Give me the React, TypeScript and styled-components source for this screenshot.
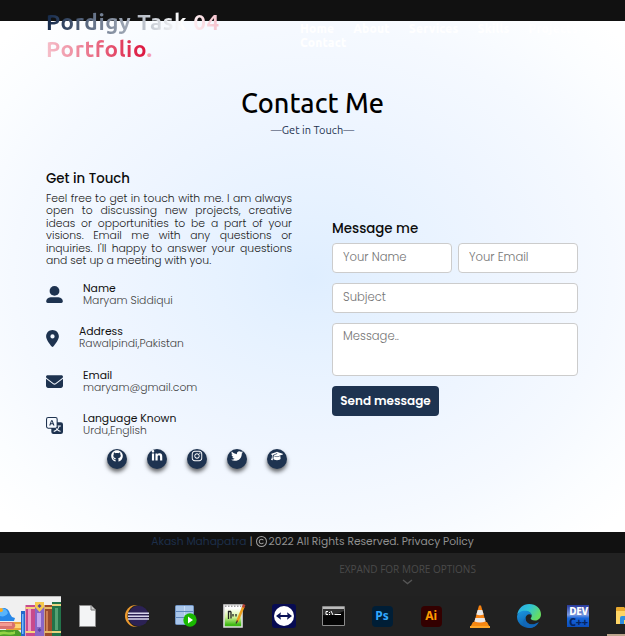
import React from 'react';
import styled, { createGlobalStyle } from 'styled-components';
import {
  FaLocationDot,
  FaEnvelope,
  FaGithub,
  FaLinkedinIn,
  FaInstagram,
  FaTwitter,
  FaGraduationCap,
  FaRegCopyright,
} from 'react-icons/fa6';
import { BsTranslate } from 'react-icons/bs';

const navy = '#1e3350';
const poppins = 'Poppins, Inter, sans-serif';
const ubuntu = 'Ubuntu, "Noto Sans", sans-serif';

const GlobalStyle = createGlobalStyle`
  * { box-sizing: border-box; margin: 0; padding: 0; }
  html, body { height: 636px; overflow: hidden; background: #222; }
  body { font-family: ${poppins}; }
`;

const Page = styled.div`
  width: 625px;
  height: 636px;
  display: flex;
  flex-direction: column;
  overflow: hidden;
`;

const Site = styled.main`
  height: 532px;
  flex: none;
  display: flex;
  flex-direction: column;
  background:
    linear-gradient(#111, #111) 0 0 / 100% 21px no-repeat,
    radial-gradient(ellipse farthest-corner at 50% 50%, #dfeeff 0%, #e7f2ff 22%, #eef5ff 44%, #f5f9ff 68%, #fbfdff 84%, #fff 96%) 0 21px / 100% 511px no-repeat;
`;

const Header = styled.header`
  height: 77px;
  padding: 8px 0 0 46px;
  display: flex;
`;

const Logo = styled.h1`
  width: 254px;
  font: 700 22.5px/27px ${ubuntu};
  letter-spacing: 0.6px;
  white-space: nowrap;
`;

const LogoInk = styled.span`
  background: linear-gradient(to right, #14294a, #fff 50%, #dc143c);
  -webkit-background-clip: text;
  background-clip: text;
  color: transparent;
`;

const LogoDot = styled.span`
  color: #f4a0b0;
`;

const Nav = styled.nav`
  width: 290px;
  padding-top: 14px;
  display: flex;
  flex-wrap: wrap;
  align-content: flex-start;
  column-gap: 19px;
`;

const NavLink = styled.a`
  font: 900 12px/14px ${ubuntu};
  letter-spacing: 0.2px;
  color: #fff;
`;

const Heading = styled.section`
  display: flex;
  flex-direction: column;
  align-items: center;
`;

const Title = styled.h2`
  margin-top: 8px;
  font: 500 27.1px/36px ${ubuntu};
  color: #000;
`;

const Subtitle = styled.p`
  margin-top: 1px;
  font: 400 11px/16px ${ubuntu};
  color: ${navy};
`;

const Columns = styled.div`
  display: grid;
  grid-template-columns: 246px 246px;
  column-gap: 40px;
  padding: 0 46px;
  margin-top: 33px;
`;

const SectionTitle = styled.h3`
  font: 500 13.35px/16px ${poppins};
  color: #0c0c0c;
`;

const Intro = styled.p`
  margin-top: 6px;
  font: 300 10.8px/12.4px ${poppins};
  color: #222;
`;

const IntroLine = styled.span`
  display: block;
  white-space: nowrap;
  text-align: justify;
  text-align-last: justify;
  &:last-child {
    text-align-last: left;
  }
`;

const Details = styled.ul`
  list-style: none;
  margin-top: 15.4px;
`;

const Detail = styled.li`
  height: 43.4px;
  display: flex;
  gap: 20px;
`;

const DetailIcon = styled.span<{ $w: number }>`
  width: ${(p) => p.$w}px;
  height: 24px;
  display: flex;
  align-items: center;
  justify-content: center;
  color: ${navy};
  svg {
    width: ${(p) => p.$w}px;
    height: 17px;
  }
`;

const DetailText = styled.div`
  font: 300 10.8px/12.2px ${poppins};
  color: #444;
`;

const DetailName = styled.div`
  font-weight: 400;
  color: #111;
`;

const DetailValue = styled.div`
  color: #444;
`;

const Socials = styled.div`
  display: flex;
  gap: 20px;
  margin-top: -7.4px;
  padding-left: 61px;
`;

const SocialLink = styled.a`
  width: 20px;
  height: 20px;
  border-radius: 50%;
  padding-top: 1px;
  display: flex;
  justify-content: center;
  background: ${navy};
  color: #fff;
  box-shadow: 0 3px 4px rgba(0, 0, 0, 0.6);
  svg {
    width: 12px;
    height: 12px;
  }
`;

const Form = styled.form`
  padding-top: 50px;
  display: grid;
  grid-template-columns: 1fr 1fr;
  column-gap: 6px;
  row-gap: 10px;
  align-content: start;
`;

const FormTitle = styled(SectionTitle)`
  grid-column: 1 / -1;
  margin-bottom: -4px;
`;

const field = `
  width: 100%;
  border: 1px solid #ccc;
  border-radius: 4px;
  background: #fff;
  font: 300 11.6px ${poppins};
  outline: none;
  resize: none;
  &::placeholder { color: #757575; opacity: 1; }
`;

const Input = styled.input<{ $wide?: boolean }>`
  ${field}
  height: 30px;
  padding: 0 10px 2px;
  grid-column: ${(p) => (p.$wide ? '1 / -1' : 'auto')};
`;

const TextArea = styled.textarea`
  ${field}
  display: block;
  height: 53px;
  padding: 4px 10px;
  grid-column: 1 / -1;
`;

const SendButton = styled.button`
  grid-column: 1 / -1;
  width: 107px;
  height: 30px;
  border: 0;
  border-radius: 4px;
  background: ${navy};
  color: #fff;
  font: 600 12px ${poppins};
  white-space: nowrap;
`;

const Footer = styled.footer`
  flex: none;
  height: 21px;
  padding-bottom: 2px;
  display: flex;
  align-items: center;
  justify-content: center;
  background: #111;
  color: #8f8f8f;
  font: 400 10.7px/16px ${poppins};
  white-space: pre;
  svg {
    width: 11px;
    height: 11px;
    margin: 0 2px 0 3px;
    color: #a0a0a0;
  }
`;

const Author = styled.a`
  color: #1d2f4a;
  margin-right: 3px;
`;

const Expand = styled.div`
  flex: none;
  height: 43px;
  padding: 9px 0 0 190px;
  display: flex;
  flex-direction: column;
  align-items: center;
  background: #222;
  color: #4a4a4a;
  font: 400 10px/14px "Open Sans", sans-serif;
  svg {
    margin-top: 3px;
  }
`;

const Taskbar = styled.div`
  flex: none;
  height: 40px;
  display: flex;
  background: #212121;
`;

const Slot = styled.div<{ $active?: boolean }>`
  flex: none;
  width: 49.1px;
  height: 40px;
  display: flex;
  align-items: center;
  justify-content: center;
  box-shadow: ${(p) => (p.$active ? 'inset 0 -2px #bda58d' : 'none')};
  &:last-child {
    margin-left: 4px;
    padding-right: 8px;
  }
`;

const Books = styled.div`
  flex: none;
  width: 61px;
  height: 40px;
  margin-right: 2px;
  svg { display: block; }
`;

const AdobeTile = styled.span<{ $bg: string; $ink: string }>`
  width: 21px;
  height: 21px;
  border-radius: 4px;
  display: flex;
  align-items: center;
  justify-content: center;
  background: ${(p) => p.$bg};
  color: ${(p) => p.$ink};
  font: 700 12px/20px "Noto Sans", sans-serif;
`;

const DevTile = styled.span`
  width: 22px;
  height: 22px;
  display: flex;
  flex-direction: column;
  align-items: center;
  background: linear-gradient(#26389a, #7d9ade 45%, #1766dc 60%, #0b4dbb);
  color: #fff;
  font: 800 10px/12px "Noto Sans", sans-serif;
  letter-spacing: -0.3px;
`;

const DevSuffix = styled.span`
  color: #06245f;
  font-size: 11px;
  line-height: 10px;
`;

const PersonIcon = () => (
  <svg viewBox="0 0 17 17" fill="currentColor">
    <circle cx="8.5" cy="4.9" r="4.9" />
    <path d="M.2 15.5C.2 12.6 3 11.3 5.5 11.3h6c2.500 0 5.300 1.300 5.300 4.200 0 .9-.6 1.400-1.400 1.400H1.600C.8 16.900.2 16.400.2 15.500z" />
  </svg>
);

const BooksIcon = () => (
  <svg width="61" height="40" viewBox="0 0 61 40">
    <path fill="#f0f0f0" d="M0 0h61v40H0z" />
    <path fill="#bbb" d="M0 0h61v1H0z" />
    <path fill="#2787e8" d="M0 14c3-4 9-2 10 4l2 3 3 1-1 3H0z" />
    <path fill="#59b4fb" d="M0 14c3-3 7-1 8 3-2 3-5 4-8 3z" />
    <circle cx="1" cy="14" r="2" fill="#f9ac24" />
    <path fill="#eaa23b" d="M6 26h15v8H6z" />
    <path fill="#ffd572" d="M14 28h7v4h-7z" />
    <path fill="#d9706f" d="M0 26h13c3 2 3 5 0 7H0z" />
    <path fill="#f39b92" d="M0 27h12v3H0z" />
    <path fill="#4b9d29" d="M0 34h18l3 3v3H0z" />
    <path fill="#92d445" d="M0 36c5-2 9 2 15-1v3c-6 2-10-1-15 1z" />
    <path fill="#2269cc" d="M21 15h4v25h-4z" />
    <path fill="#75b8fa" d="M22 18h1.500v20H22z" />
    <path fill="#c84a8c" d="M25.500 9H35v31h-9.500z" />
    <path fill="#ed9bc6" d="M28 13h3v22h-3z" />
    <path fill="#f5d37c" d="M25.500 11H35v2h-9.500zM25.500 35H35v2h-9.500z" />
    <path fill="#8966c6" d="M35 6h9v34h-9z" />
    <path fill="#c3a4ed" d="M37 17h4v14h-4z" />
    <path fill="#f5c94d" d="M35 6h9v5l-4.500 5L35 11z" />
    <path fill="#59449d" d="M39.500 8l2 2-2 2-2-2zM39.500 32l2 2-2 2-2-2z" />
    <path fill="#9c4b2b" d="M44.500 9H52v31h-7.500z" />
    <path fill="#ce7e50" d="M46 15h2v20h-2z" />
    <path fill="#e8ba64" d="M44.500 11H52v2h-7.500zM44.500 35H52v2h-7.500z" />
    <path fill="#23734a" d="M52 6h9v34h-9z" />
    <path fill="#55a274" d="M55 12h3v22h-3z" />
    <path fill="#e9d480" d="M52 8h9v2h-9zM52 35h9v2h-9z" />
  </svg>
);

const FileIcon = () => (
  <svg width="17" height="22" viewBox="0 0 17 22">
    <path d="M.5.5h11.500l4.500 4.500v16.500H.5z" fill="#f3f4f5" stroke="#8d8d8d" />
    <path d="M12 .5V5h4.500" fill="#ccc" stroke="#777" />
  </svg>
);

const EclipseIcon = () => (
  <svg width="24" height="22" viewBox="0 0 24 22">
    <circle cx="11" cy="11" r="11" fill="#ed9a2e" />
    <circle cx="13.500" cy="11" r="11" fill="#212121" />
    <circle cx="13.500" cy="11" r="10.200" fill="#2c2255" />
    <path d="M3 8.300h21M3 11.200h21M3 14h21" stroke="#d8d5ec" strokeWidth="1.500" />
  </svg>
);

const ServerIcon = () => (
  <svg width="22" height="22" viewBox="0 0 22 22">
    <rect x=".5" y=".5" width="18" height="19" rx="1" fill="#a9c6ea" stroke="#7195c5" />
    <path d="M9 1h1v18H9z" fill="#c9ddf5" />
    <path d="M1 6.500h17M1 12.500h17" stroke="#5f87bd" />
    <circle cx="15" cy="15" r="6.700" fill="#19b800" />
    <path d="M13 11.500l5 3.500-5 3.500z" fill="#fff" />
  </svg>
);

const NotepadIcon = () => (
  <svg width="23" height="24" viewBox="0 0 23 24">
    <defs>
      <linearGradient id="note" x2="0" y2="1">
        <stop offset=".15" stopColor="#fff" />
        <stop offset=".55" stopColor="#d3f399" />
        <stop offset=".9" stopColor="#3eb812" />
      </linearGradient>
    </defs>
    <path d="M1 1h18v22H1z" fill="url(#note)" stroke="#ddd" strokeWidth="1.600" />
    <path d="M2 2.200h16" stroke="#777" strokeDasharray="1.500 1.500" />
    <path d="M5.500 7v8M8 7.500v7M5 7.500h3M10 10v2.500M13 10v2.500" stroke="#222" strokeWidth="1.300" />
    <path d="M20.500 2.500L14 18" stroke="#ec9e1d" strokeWidth="2.500" />
    <path d="M21.300.5l-1.200 3" stroke="#b84337" strokeWidth="2.500" />
    <path d="M14.500 16.500l-1.500 3" stroke="#333" strokeWidth="1.200" />
  </svg>
);

const TeamViewerIcon = () => (
  <svg width="24" height="24" viewBox="0 0 24 24">
    <rect width="24" height="24" rx="3" fill="#070b52" />
    <circle cx="12" cy="12" r="10" fill="#fff" />
    <path d="M4 12l5-3.800-.6 2.700h7.200L15 8.200l5 3.800-5 3.800.6-2.700H8.400l.6 2.700z" fill="#0a1257" />
  </svg>
);

const TerminalIcon = () => (
  <svg width="23" height="20" viewBox="0 0 23 20">
    <path d="M.5.5h22v19H.5z" fill="#050505" stroke="#8b8b8b" />
    <path d="M1 1h21v2H1z" fill="#bbb" />
    <path d="M1 9C9 10 16 8 22 5V3H1z" fill="#303030" />
    <path d="M6 5.500H4v3h2M7.500 6v1M7.500 8v1M9 5l2 4M12.500 8.500H19" fill="none" stroke="#fff" />
  </svg>
);

const ConeIcon = () => (
  <svg width="20" height="23" viewBox="0 0 20 23">
    <path d="M3 17h14l3 5.500H0z" fill="#f58a12" />
    <path d="M9 .5h2L16 18q-6 3-12 0z" fill="#f68212" />
    <path d="M7.700 5h4.600l1.400 4.500q-3.700 1.500-7.400 0zM5.400 13h9.200l1 3.500q-5.600 2-11.200 0z" fill="#e8e8e8" />
    <path d="M0 21h20v2H0z" fill="#ffa629" />
  </svg>
);

const EdgeIcon = () => (
  <svg width="24" height="24" viewBox="0 0 24 24">
    <defs>
      <linearGradient id="edgeTop" x1="0" y1="0" x2="1" y2=".5">
        <stop offset="0" stopColor="#2aa6e8" />
        <stop offset=".5" stopColor="#2fc3d4" />
        <stop offset="1" stopColor="#66dd61" />
      </linearGradient>
      <linearGradient id="edgeBase" x2=".5" y2="1">
        <stop offset="0" stopColor="#1b98e2" />
        <stop offset="1" stopColor="#0c59a6" />
      </linearGradient>
    </defs>
    <path d="M.2 11C1 4.500 6 0 12.200 0 19 0 24 4.800 24 10.200c0 4-3 6.300-6 6.300-3.200 0-4.300-1.300-4.300-1.900 0-.8 1-1 1-2.900 0-2.500-2.500-4.200-5.600-4.200C5 7.500 1 9 .2 11z" fill="url(#edgeTop)" />
    <path d="M.1 12C.5 8.700 4 6.700 8 6.700c3.700 0 6.500 2 6.600 4.400C12.500 9 8.500 10.500 8.500 14.500c0 4.500 5.500 7 9.500 5.300l3.700-1.500C20 21.500 16.500 24 12 24 5 24-.6 18.500.1 12z" fill="url(#edgeBase)" />
    <path d="M8.500 14c-.5 6 7 9 13.200 4.300C19 22.500 16 24 12.500 24 7 23 4 17 8.500 14z" fill="#1267b8" />
  </svg>
);

const FolderIcon = () => (
  <svg width="24" height="20" viewBox="0 0 24 20">
    <path d="M0 2q0-1 1-1h7l2 2h13q1 0 1 1v14H0z" fill="#e9a92f" />
    <path d="M0 5h24v13H0z" fill="#ffd565" />
    <path d="M4 18v-6q0-2 2-2h12q2 0 2 2v6h-4v-4H8v4z" fill="#2f8fdf" />
  </svg>
);

const navItems = ['Home', 'About', 'Services', 'Skills', 'Projects', 'Contact'];

const introLines = [
  'Feel free to get in touch with me. I am always',
  'open to discussing new projects, creative',
  'ideas or opportunities to be a part of your',
  'visions. Email me with any questions or',
  "inquiries. I'll happy to answer your questions",
  'and set up a meeting with you.',
];

const details = [
  { icon: <PersonIcon />, width: 17, name: 'Name', value: 'Maryam Siddiqui' },
  { icon: <FaLocationDot />, width: 13, name: 'Address', value: 'Rawalpindi,Pakistan' },
  { icon: <FaEnvelope />, width: 17, name: 'Email', value: 'maryam@gmail.com' },
  { icon: <BsTranslate />, width: 17, name: 'Language Known', value: 'Urdu,English' },
];

const socials = [FaGithub, FaLinkedinIn, FaInstagram, FaTwitter, FaGraduationCap];

export default function App() {
  return (
    <Page>
      <GlobalStyle />
      <Site>
        <Header>
          <Logo>
            <LogoInk>
              Pordigy Task 04
              <br />
              Portfolio
            </LogoInk>
            <LogoDot>.</LogoDot>
          </Logo>
          <Nav>
            {navItems.map((item) => (
              <NavLink key={item}>{item}</NavLink>
            ))}
          </Nav>
        </Header>
        <Heading>
          <Title>Contact Me</Title>
          <Subtitle>—Get in Touch—</Subtitle>
        </Heading>
        <Columns>
          <section>
            <SectionTitle>Get in Touch</SectionTitle>
            <Intro>
              {introLines.map((line) => (
                <IntroLine key={line}>{line}</IntroLine>
              ))}
            </Intro>
            <Details>
              {details.map((d) => (
                <Detail key={d.name}>
                  <DetailIcon $w={d.width}>{d.icon}</DetailIcon>
                  <DetailText>
                    <DetailName>{d.name}</DetailName>
                    <DetailValue>{d.value}</DetailValue>
                  </DetailText>
                </Detail>
              ))}
            </Details>
            <Socials>
              {socials.map((Icon, i) => (
                <SocialLink key={i}>
                  <Icon />
                </SocialLink>
              ))}
            </Socials>
          </section>
          <Form>
            <FormTitle>Message me</FormTitle>
            <Input placeholder="Your Name" />
            <Input placeholder="Your Email" />
            <Input placeholder="Subject" $wide />
            <TextArea placeholder="Message.." />
            <SendButton type="button">Send message</SendButton>
          </Form>
        </Columns>
      </Site>
      <Footer>
        <Author>Akash Mahapatra</Author>|<FaRegCopyright />
        2022 All Rights Reserved. Privacy Policy
      </Footer>
      <Expand>
        EXPAND FOR MORE OPTIONS
        <svg width="11" height="6" viewBox="0 0 11 6" fill="none" stroke="#555" strokeWidth="1.4">
          <path d="M1 1l4.500 3.500L10 1" />
        </svg>
      </Expand>
      <Taskbar>
        <Books><BooksIcon /></Books>
        <Slot><FileIcon /></Slot>
        <Slot><EclipseIcon /></Slot>
        <Slot><ServerIcon /></Slot>
        <Slot><NotepadIcon /></Slot>
        <Slot><TeamViewerIcon /></Slot>
        <Slot><TerminalIcon /></Slot>
        <Slot><AdobeTile $bg="#001e36" $ink="#31a8ff">Ps</AdobeTile></Slot>
        <Slot><AdobeTile $bg="#330000" $ink="#ff9a00">Ai</AdobeTile></Slot>
        <Slot><ConeIcon /></Slot>
        <Slot><EdgeIcon /></Slot>
        <Slot>
          <DevTile>
            DEV
            <DevSuffix>C++</DevSuffix>
          </DevTile>
        </Slot>
        <Slot $active><FolderIcon /></Slot>
      </Taskbar>
    </Page>
  );
}
